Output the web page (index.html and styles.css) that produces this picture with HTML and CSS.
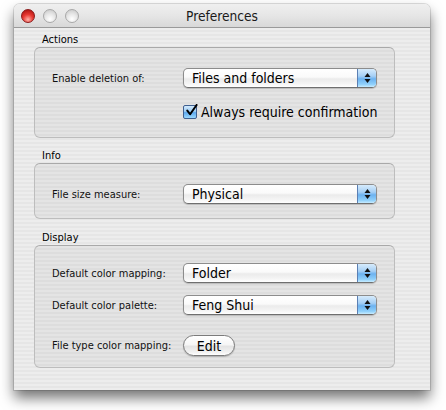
FILE: index.html
```html
<!DOCTYPE html>
<html>
<head>
<meta charset="utf-8">
<link rel="stylesheet" href="styles.css">
</head>
<body>
<div class="window">
  <div class="titlebar">
    <div class="lights">
      <span class="light close"></span>
      <span class="light"></span>
      <span class="light"></span>
    </div>
    <div class="title">Preferences</div>
  </div>
  <div class="content">
    <div class="group-label">Actions</div>
    <div class="group group-actions">
      <div class="label">Enable deletion of:</div>
      <div class="popup"><span class="popup-text">Files and folders</span><span class="stepper"><svg width="9" height="12" viewBox="0 0 9 12"><path d="M4.5 1 L7.5 5 H1.5 Z M1.5 7 H7.5 L4.5 11 Z" fill="#111"/></svg></span></div>
      <div class="check-row">
        <span class="checkbox"><svg width="14" height="14" viewBox="0 0 14 14"><path d="M2.5 6.5 L5.5 10.5 L12.5 0.5" fill="none" stroke="#000" stroke-width="2.2" stroke-linecap="round" stroke-linejoin="round"/></svg></span>
        <span class="check-text">Always require confirmation</span>
      </div>
    </div>

    <div class="group-label gap-info">Info</div>
    <div class="group group-info">
      <div class="label">File size measure:</div>
      <div class="popup"><span class="popup-text">Physical</span><span class="stepper"><svg width="9" height="12" viewBox="0 0 9 12"><path d="M4.5 1 L7.5 5 H1.5 Z M1.5 7 H7.5 L4.5 11 Z" fill="#111"/></svg></span></div>
    </div>

    <div class="group-label gap-display">Display</div>
    <div class="group group-display">
      <div class="label">Default color mapping:</div>
      <div class="popup"><span class="popup-text">Folder</span><span class="stepper"><svg width="9" height="12" viewBox="0 0 9 12"><path d="M4.5 1 L7.5 5 H1.5 Z M1.5 7 H7.5 L4.5 11 Z" fill="#111"/></svg></span></div>
      <div class="label">Default color palette:</div>
      <div class="popup"><span class="popup-text">Feng Shui</span><span class="stepper"><svg width="9" height="12" viewBox="0 0 9 12"><path d="M4.5 1 L7.5 5 H1.5 Z M1.5 7 H7.5 L4.5 11 Z" fill="#111"/></svg></span></div>
      <div class="label label-edit">File type color mapping:</div>
      <div class="edit-cell"><button class="button">Edit</button></div>
    </div>
  </div>
</div>
</body>
</html>
```

FILE: styles.css
```css
html, body {
  margin: 0;
  padding: 0;
  background: #ffffff;
}
body {
  font-family: "DejaVu Sans Condensed", "DejaVu Sans", sans-serif;
  font-stretch: semi-condensed;
  color: #000;
  width: 446px;
  height: 410px;
  overflow: hidden;
  white-space: nowrap;
}
.window {
  margin: 4px 0 0 14px;
  width: 416px;
  height: 386px;
  border-radius: 6px 6px 0 0;
  background: repeating-linear-gradient(180deg, #ededed 0px, #ededed 2px, #e6e6e6 2px, #e6e6e6 4px);
  box-shadow: 0 8px 14px rgba(0, 0, 0, 0.55), 0 0 0 1px rgba(0,0,0,0.12);
  overflow: hidden;
}
.titlebar {
  position: relative;
  height: 23px;
  border-bottom: 1px solid #9a9a9a;
  background: linear-gradient(180deg, #efefef 0%, #e6e6e6 50%, #d8d8d8 100%);
  display: flex;
  align-items: center;
  justify-content: center;
}
.lights {
  position: absolute;
  left: 7px;
  top: 5px;
  display: flex;
  gap: 8px;
}
.light {
  width: 14px;
  height: 14px;
  border-radius: 50%;
  box-sizing: border-box;
  border: 1px solid #a8a8a8;
  background: radial-gradient(circle at 50% 75%, #ffffff 0%, #e8e8e8 45%, #c4c4c4 100%);
}
.light.close {
  border-color: #8a1a1a;
  background: radial-gradient(circle at 50% 80%, #ffb0a8 0%, #e83a33 45%, #a10a0a 100%);
}
.title {
  font-size: 13.6px;
  color: #1a1a1a;
  padding-top: 1px;
}
.content {
  padding: 5px 0 0 20px;
}
.group-label {
  font-size: 11px;
  height: 14px;
  line-height: 14px;
  padding-left: 8px;
}
.gap-info { margin-top: 11px; }
.gap-display { margin-top: 12px; }
.group {
  width: 361px;
  box-sizing: border-box;
  border: 1px solid #bdbdbd;
  border-top-color: #a9a9a9;
  border-radius: 6px;
  background: repeating-linear-gradient(180deg, #e4e4e4 0px, #e4e4e4 2px, #dddddd 2px, #dddddd 4px);
  display: grid;
  grid-template-columns: 131px 194px;
  align-items: center;
}
.group-actions { padding: 20px 17px 17px; row-gap: 16px; }
.group-info { padding: 20px 17px 14px; }
.group-display { padding: 17px 17px 11px; row-gap: 12px; }
.label-edit { margin-top: 8px; }
.edit-cell { margin-top: 8px; height: 21px; }
.label {
  font-size: 11px;
  color: #111;
}
.popup {
  height: 20px;
  box-sizing: border-box;
  border: 1px solid #8c8c8c;
  border-bottom-color: #6f6f6f;
  border-radius: 5px;
  background: linear-gradient(180deg, #ffffff 0%, #fafafa 45%, #ebebeb 55%, #f4f4f4 80%, #ffffff 100%);
  box-shadow: 0 1px 1px rgba(0,0,0,0.18);
  display: flex;
  align-items: center;
  overflow: hidden;
}
.popup-text {
  flex: 1;
  font-size: 14px;
  padding-left: 8px;
  line-height: 18px;
}
.stepper {
  width: 18px;
  height: 100%;
  border-left: 1px solid #5b7fb3;
  background: linear-gradient(180deg, #d6ebfc 0%, #a5cff5 40%, #6cb2f0 55%, #8fd0fb 85%, #c8ecff 100%);
  display: flex;
  align-items: center;
  justify-content: center;
}
.check-row {
  grid-column: 2;
  display: flex;
  align-items: center;
  height: 16px;
}
.checkbox {
  width: 14px;
  height: 14px;
  box-sizing: border-box;
  border: 1px solid #3f5f8f;
  border-radius: 2px;
  background: linear-gradient(180deg, #d3eafd 0%, #9cccf5 45%, #5ea9ee 55%, #9ad8fd 100%);
  display: flex;
  align-items: center;
  justify-content: center;
  overflow: visible;
}
.checkbox svg {
  margin: -3px -2px 0 1px;
}
.check-text {
  font-size: 14px;
  margin-left: 4px;
}
.button {
  display: block;
  width: 52px;
  height: 21px;
  box-sizing: border-box;
  border: 1px solid #7b7b7b;
  border-radius: 11px;
  background: linear-gradient(180deg, #ffffff 0%, #f6f6f6 45%, #e4e4e4 55%, #f2f2f2 85%, #ffffff 100%);
  box-shadow: 0 1px 1px rgba(0,0,0,0.2);
  font-family: inherit;
  font-stretch: inherit;
  font-size: 14px;
  color: #000;
  padding: 0;
  line-height: 18px;
}
```
